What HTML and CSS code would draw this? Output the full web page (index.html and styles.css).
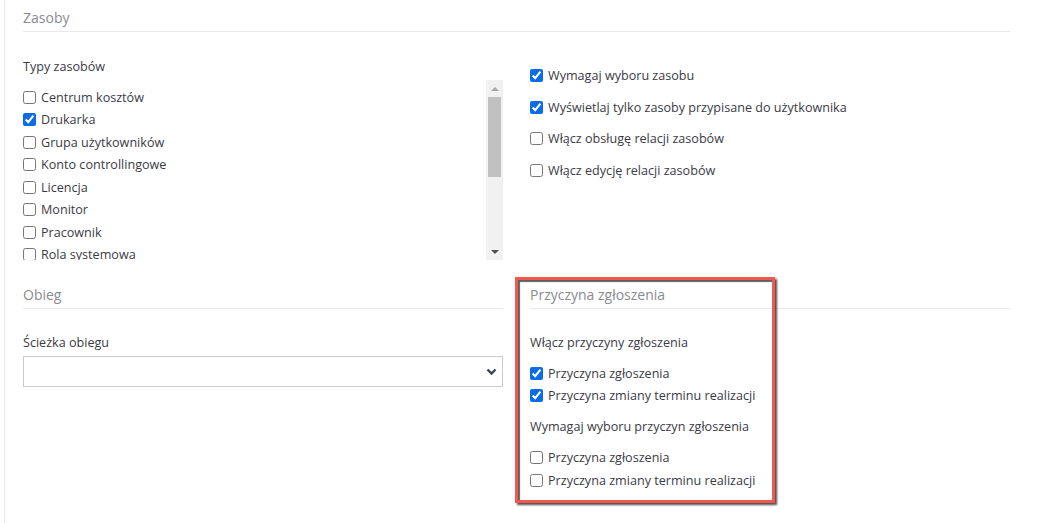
FILE: index.html
```html
<!DOCTYPE html>
<html lang="pl">
<head>
    <meta charset="UTF-8">
    <meta name="viewport" content="width=device-width, initial-scale=1.0">
    <title>Zasoby</title>
    <link rel="stylesheet" href="styles.css">
</head>
<body>
    <div class="page">
        <h2 class="section-title">Zasoby</h2>

        <div class="row row-top">
            <div class="col">
                <div class="field-label">Typy zasobów</div>
                <div class="listbox">
                    <div class="list-items">
                        <label class="check"><input type="checkbox"> Centrum kosztów</label>
                        <label class="check"><input type="checkbox" checked> Drukarka</label>
                        <label class="check"><input type="checkbox"> Grupa użytkowników</label>
                        <label class="check"><input type="checkbox"> Konto controllingowe</label>
                        <label class="check"><input type="checkbox"> Licencja</label>
                        <label class="check"><input type="checkbox"> Monitor</label>
                        <label class="check"><input type="checkbox"> Pracownik</label>
                        <label class="check"><input type="checkbox"> Rola systemowa</label>
                        <label class="check"><input type="checkbox"> Serwer</label>
                        <label class="check"><input type="checkbox"> Stanowisko</label>
                    </div>
                    <div class="scrollbar">
                        <span class="sb-btn"><span class="arrow-up"></span></span>
                        <span class="sb-thumb"></span>
                        <span class="sb-track"></span>
                        <span class="sb-btn"><span class="arrow-down"></span></span>
                    </div>
                </div>
            </div>
            <div class="col options">
                <label class="check"><input type="checkbox" checked> Wymagaj wyboru zasobu</label>
                <label class="check"><input type="checkbox" checked> Wyświetlaj tylko zasoby przypisane do użytkownika</label>
                <label class="check"><input type="checkbox"> Włącz obsługę relacji zasobów</label>
                <label class="check"><input type="checkbox"> Włącz edycję relacji zasobów</label>
            </div>
        </div>

        <div class="row row-bottom">
            <div class="col">
                <h2 class="section-title">Obieg</h2>
                <div class="field-label label-select">Ścieżka obiegu</div>
                <div class="select">
                    <svg class="chevron" width="11" height="8" viewBox="0 0 11 8">
                        <polyline points="1.5,1.5 5.5,5.5 9.5,1.5" fill="none" stroke="#34455a" stroke-width="2.4"/>
                    </svg>
                </div>
            </div>
            <div class="col reasons">
                <div class="highlight"></div>
                <h2 class="section-title">Przyczyna zgłoszenia</h2>
                <div class="field-label label-reasons">Włącz przyczyny zgłoszenia</div>
                <label class="check"><input type="checkbox" checked> Przyczyna zgłoszenia</label>
                <label class="check"><input type="checkbox" checked> Przyczyna zmiany terminu realizacji</label>
                <div class="field-label label-require">Wymagaj wyboru przyczyn zgłoszenia</div>
                <label class="check"><input type="checkbox"> Przyczyna zgłoszenia</label>
                <label class="check"><input type="checkbox"> Przyczyna zmiany terminu realizacji</label>
            </div>
        </div>
    </div>
</body>
</html>
```

FILE: styles.css
```css
html, body { margin: 0; padding: 0; background: #fff; }
body { font-family: "Open Sans", Arial, sans-serif; font-size: 12.6px; color: #3b3b45; }

.page { margin-left: 4px; border-left: 1px solid #e6eaee; min-height: 523px; padding: 0 54px 0 18px; box-sizing: border-box; }

.section-title { margin: 0; padding-top: 8px; padding-bottom: 3px; font-size: 14px; font-weight: 400; line-height: 20px; color: #8a8a90; border-bottom: 1px solid #e8e8e8; }

.row { display: grid; grid-template-columns: 480px 480px; column-gap: 27px; }

.field-label { line-height: 18px; }
.row-top .field-label { margin-top: 26px; margin-bottom: 4px; }

.check { display: flex; align-items: center; height: 22.5px; white-space: nowrap; }
.check input { width: 13px; height: 13px; margin: 0 5px 0 0; accent-color: #0a6ce8; }

/* list with a drawn scrollbar */
.listbox { display: flex; height: 180px; }
.list-items { flex: 1; overflow: hidden; padding-top: 6px; }
.scrollbar { width: 17px; background: #f1f1f1; display: flex; flex-direction: column; }
.sb-btn { height: 17px; display: flex; align-items: center; justify-content: center; }
.sb-thumb { height: 80px; margin: 0 2px; background: #c1c1c1; }
.sb-track { flex: 1; }
.arrow-up { width: 0; height: 0; border-left: 4px solid transparent; border-right: 4px solid transparent; border-bottom: 4px solid #a8a8a8; }
.arrow-down { width: 0; height: 0; border-left: 4px solid transparent; border-right: 4px solid transparent; border-top: 4px solid #505050; }

.options { padding-top: 33px; }
.options .check { height: 21px; margin-bottom: 10.5px; }

.row-bottom { margin-top: 17px; }
.label-select { margin-top: 25px; margin-bottom: 4px; }
.select { height: 31px; border: 1px solid #cccccc; box-sizing: border-box; display: flex; align-items: center; justify-content: flex-end; padding-right: 5px; }

.reasons { position: relative; }
.label-reasons { margin-top: 25px; margin-bottom: 10px; }
.label-require { margin-top: 11px; margin-bottom: 10.5px; }

.highlight { position: absolute; left: -15px; top: 0; width: 260px; height: 226px; box-sizing: border-box; border: 3px solid #f4574b; box-shadow: inset 2px 2px 1px rgba(40, 40, 40, 0.75), 2px 2px 2px rgba(0, 0, 0, 0.7); pointer-events: none; }
```
